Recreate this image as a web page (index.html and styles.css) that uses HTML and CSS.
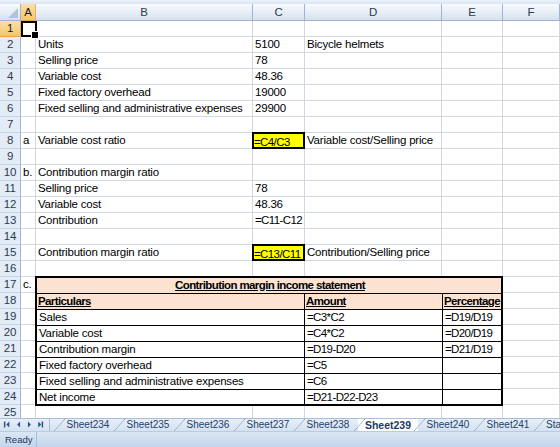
FILE: index.html
```html
<!DOCTYPE html>
<html lang="en">
<head>
    <meta charset="UTF-8">
    <title>Sheet239 - Contribution margin</title>
    <link rel="stylesheet" href="styles.css">
</head>
<body>

<div class="window">
    <div class="bar-edge"></div>

    <div class="sheet">
        <div class="corner"></div>
        <div class="hd sel">A</div>
        <div class="hd">B</div>
        <div class="hd">C</div>
        <div class="hd">D</div>
        <div class="hd">E</div>
        <div class="hd">F</div>

        <div class="rh sel">1</div><div class="c active"></div><div class="c"></div><div class="c"></div><div class="c"></div><div class="c"></div><div class="c"></div>
        <div class="rh">2</div><div class="c"></div><div class="c">Units</div><div class="c">5100</div><div class="c">Bicycle helmets</div><div class="c"></div><div class="c"></div>
        <div class="rh">3</div><div class="c"></div><div class="c">Selling price</div><div class="c">78</div><div class="c"></div><div class="c"></div><div class="c"></div>
        <div class="rh">4</div><div class="c"></div><div class="c">Variable cost</div><div class="c">48.36</div><div class="c"></div><div class="c"></div><div class="c"></div>
        <div class="rh">5</div><div class="c"></div><div class="c">Fixed factory overhead</div><div class="c">19000</div><div class="c"></div><div class="c"></div><div class="c"></div>
        <div class="rh">6</div><div class="c"></div><div class="c">Fixed selling and administrative expenses</div><div class="c">29900</div><div class="c"></div><div class="c"></div><div class="c"></div>
        <div class="rh">7</div><div class="c"></div><div class="c"></div><div class="c"></div><div class="c"></div><div class="c"></div><div class="c"></div>
        <div class="rh">8</div><div class="c">a</div><div class="c">Variable cost ratio</div><div class="c hl fx">=C4/C3</div><div class="c">Variable cost/Selling price</div><div class="c"></div><div class="c"></div>
        <div class="rh">9</div><div class="c"></div><div class="c"></div><div class="c"></div><div class="c"></div><div class="c"></div><div class="c"></div>
        <div class="rh">10</div><div class="c">b.</div><div class="c">Contribution margin ratio</div><div class="c"></div><div class="c"></div><div class="c"></div><div class="c"></div>
        <div class="rh">11</div><div class="c"></div><div class="c">Selling price</div><div class="c">78</div><div class="c"></div><div class="c"></div><div class="c"></div>
        <div class="rh">12</div><div class="c"></div><div class="c">Variable cost</div><div class="c">48.36</div><div class="c"></div><div class="c"></div><div class="c"></div>
        <div class="rh">13</div><div class="c"></div><div class="c">Contribution</div><div class="c fx">=C11-C12</div><div class="c"></div><div class="c"></div><div class="c"></div>
        <div class="rh">14</div><div class="c"></div><div class="c"></div><div class="c"></div><div class="c"></div><div class="c"></div><div class="c"></div>
        <div class="rh">15</div><div class="c"></div><div class="c">Contribution margin ratio</div><div class="c hl fx">=C13/C11</div><div class="c">Contribution/Selling price</div><div class="c"></div><div class="c"></div>
        <div class="rh">16</div><div class="c"></div><div class="c"></div><div class="c"></div><div class="c"></div><div class="c"></div><div class="c"></div>

        <!-- rows 17-24: B:E is covered by the statement block -->
        <div class="statement">
            <div class="st title">Contribution margin income statement</div>
            <div class="st head">Particulars</div><div class="st head">Amount</div><div class="st head">Percentage</div>
            <div class="st">Sales</div><div class="st fx">=C3*C2</div><div class="st fx">=D19/D19</div>
            <div class="st">Variable cost</div><div class="st fx">=C4*C2</div><div class="st fx">=D20/D19</div>
            <div class="st">Contribution margin</div><div class="st fx">=D19-D20</div><div class="st fx">=D21/D19</div>
            <div class="st">Fixed factory overhead</div><div class="st fx">=C5</div><div class="st"></div>
            <div class="st">Fixed selling and administrative expenses</div><div class="st fx">=C6</div><div class="st"></div>
            <div class="st">Net income</div><div class="st fx">=D21-D22-D23</div><div class="st"></div>
        </div>
        <div class="rh">17</div><div class="c">c.</div><div class="c"></div>
        <div class="rh">18</div><div class="c"></div><div class="c"></div>
        <div class="rh">19</div><div class="c"></div><div class="c"></div>
        <div class="rh">20</div><div class="c"></div><div class="c"></div>
        <div class="rh">21</div><div class="c"></div><div class="c"></div>
        <div class="rh">22</div><div class="c"></div><div class="c"></div>
        <div class="rh">23</div><div class="c"></div><div class="c"></div>
        <div class="rh">24</div><div class="c"></div><div class="c"></div>
        <div class="rh">25</div><div class="c"></div><div class="c"></div><div class="c"></div><div class="c"></div><div class="c"></div><div class="c"></div>
    </div>

    <div class="tabbar">
        <svg class="nav" width="50" height="13" viewBox="0 0 50 13">
            <rect x="4" y="3.5" width="1.5" height="6" fill="#2e4f80"/>
            <polygon points="9.5,3.5 6.5,6.5 9.5,9.5" fill="#2e4f80"/>
            <polygon points="20.5,3.5 17.5,6.5 20.5,9.5" fill="#2e4f80"/>
            <polygon points="28.5,3.5 31.5,6.5 28.5,9.5" fill="#2e4f80"/>
            <polygon points="39,3.5 42,6.5 39,9.5" fill="#2e4f80"/>
            <rect x="42.5" y="3.5" width="1.5" height="6" fill="#2e4f80"/>
        </svg>
        <div class="tabs">
            <span class="tab">Sheet234</span>
            <span class="tab">Sheet235</span>
            <span class="tab">Sheet236</span>
            <span class="tab">Sheet237</span>
            <span class="tab">Sheet238</span>
            <span class="tab active">Sheet239</span>
            <span class="tab">Sheet240</span>
            <span class="tab">Sheet241</span>
            <span class="tab last">Sta</span>
        </div>
    </div>

    <div class="status">
        <span class="ready">Ready</span>
    </div>
</div>

</body>
</html>
```

FILE: styles.css
```css
* {
    box-sizing: border-box;
}

html,
body {
    margin: 0;
    padding: 0;
}

body {
    font-family: "Liberation Sans", Arial, sans-serif;
    font-size: 11.5px;
    letter-spacing: -0.2px;
    color: #000;
    background: #fff;
}

.window {
    display: flex;
    flex-direction: column;
    width: 560px;
    height: 447px;
    overflow: hidden;
}

.bar-edge {
    flex: none;
    height: 4px;
    background: linear-gradient(#eef3fa, #d9e4f2);
}

/* grid of cells */

.sheet {
    flex: 1;
    min-height: 0;
    overflow: hidden;
    display: grid;
    grid-template-columns: 21px 15px 217px 52px 137px 61px 1fr;
    grid-template-rows: 17px;
    grid-auto-rows: 16px;
}

.corner,
.hd {
    background: linear-gradient(#f9fbfd, #e6edf6 55%, #d7e1ee);
    border-right: 1px solid #9eb6ce;
    border-bottom: 1px solid #9eb6ce;
}

.corner {
    position: relative;
}

.corner::after {
    content: '';
    position: absolute;
    right: 2px;
    bottom: 2px;
    width: 10px;
    height: 10px;
    background: #b3c3d8;
    clip-path: polygon(100% 0, 100% 100%, 0 100%);
}

.hd {
    padding-top: 1px;
    line-height: 15px;
    text-align: center;
    color: #2c3b50;
}

.rh {
    background: #e4ecf7;
    border-right: 1px solid #9eb6ce;
    border-bottom: 1px solid #c5d5e9;
    line-height: 15px;
    text-align: center;
    color: #2c3b50;
}

.hd.sel,
.rh.sel {
    background: linear-gradient(#fbe0aa, #f4c66a);
    border-bottom-color: #f0a040;
    border-right-color: #e8b060;
    color: #1a1a1a;
}

.c {
    border-right: 1px solid #d0d7e5;
    border-bottom: 1px solid #d0d7e5;
    padding-left: 2px;
    line-height: 15px;
    white-space: nowrap;
}

.fx {
    letter-spacing: -0.6px;
}

.c.active {
    position: relative;
    z-index: 1;
    margin-right: -1px;
    border: 2px solid #000;
}

.c.active::after {
    content: '';
    position: absolute;
    right: -4px;
    bottom: -4px;
    width: 6px;
    height: 6px;
    background: #000;
    border: 1px solid #fff;
}

.c.hl {
    z-index: 1;
    margin: -1px 0 0 -1px;
    padding-left: 0;
    line-height: 14px;
    padding-top: 1px;
    background: #ff0;
    border: 2px solid #000;
}

/* bordered income statement, B17:E24 */

.statement {
    grid-column: 3 / 7;
    grid-row: 18 / 26;
    z-index: 1;
    margin: -1px 0 -1px -1px;
    display: grid;
    grid-template-columns: 268px 138px 1fr;
    grid-template-rows: repeat(8, 1fr);
    border: 2px solid #000;
    background: #fff;
}

.st {
    border-right: 1px solid #000;
    border-bottom: 1px solid #000;
    padding-left: 2px;
    line-height: 15px;
    white-space: nowrap;
}

.st:nth-child(3n + 1) {
    border-right: none;
}

.st:nth-last-child(-n + 3) {
    border-bottom: none;
}

.st.title {
    grid-column: 1 / -1;
    border-right: none;
    text-align: center;
}

.st.title,
.st.head {
    background: #fce2d1;
    font-weight: bold;
    letter-spacing: -0.6px;
    text-decoration: underline;
}

.st.head {
    padding-left: 1px;
}

/* sheet tabs */

.tabbar {
    flex: none;
    display: flex;
    height: 13px;
    overflow: hidden;
    background: linear-gradient(#e6eef8, #d6e2f1);
    border-top: 1px solid #a9bfd9;
}

.nav {
    flex: none;
    display: block;
    margin-top: -1px;
    border-right: 1px solid #a9bfd9;
}

.tabs {
    display: flex;
    padding-left: 8px;
}

.tab {
    position: relative;
    flex: none;
    width: 60px;
    font-size: 10px;
    letter-spacing: 0;
    line-height: 12px;
    text-align: center;
    color: #23406d;
}

.tab::before {
    content: '';
    position: absolute;
    left: -4px;
    top: 0;
    width: 11px;
    height: 100%;
    background: linear-gradient(to bottom right, transparent calc(50% - 0.6px), #8ea6c6 50%, transparent calc(50% + 0.6px));
}

.tab.active {
    background: #fff;
    font-weight: bold;
    font-size: 10.5px;
    color: #1d3a66;
}

.tab.last {
    width: 21px;
    padding-left: 8px;
    text-align: left;
}

/* status bar */

.status {
    flex: none;
    display: flex;
    height: 16px;
    background: linear-gradient(#dce7f5, #c2d4eb);
    border-top: 1px solid #b9cbe3;
}

.ready {
    width: 37px;
    padding-left: 5px;
    font-size: 9.5px;
    letter-spacing: 0;
    line-height: 15px;
    color: #1e395b;
    border-right: 1px solid #a8bedb;
}
```
